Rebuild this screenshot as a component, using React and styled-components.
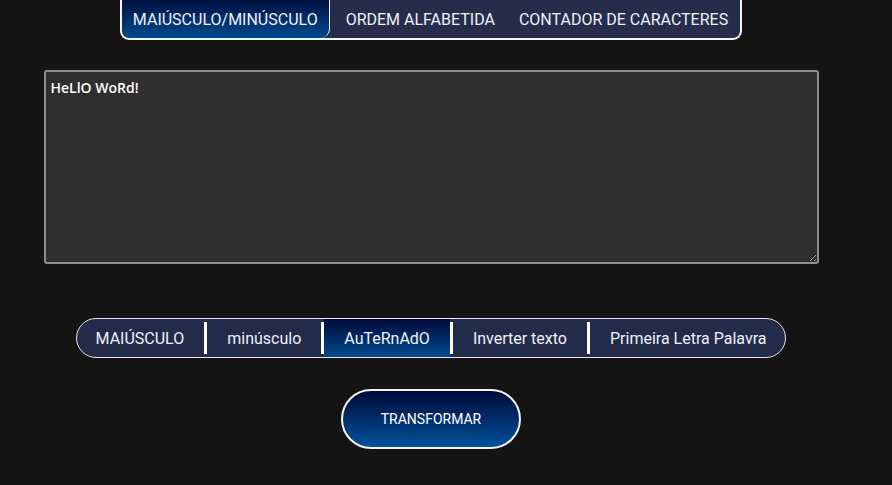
import React, { useState } from 'react';
import styled, { createGlobalStyle } from 'styled-components';

const Global = createGlobalStyle`
  body {
    margin: 0;
    background: #141414;
    font-family: Roboto, "Liberation Sans", sans-serif;
  }
`

const modes = ['MAIÚSCULO', 'minúsculo', 'AuTeRnAdO', 'Inverter texto', 'Primeira Letra Palavra'];
const tabs = ['MAIÚSCULO/MINÚSCULO', 'ORDEM ALFABETIDA', 'CONTADOR DE CARACTERES'];

const App = () => {
  const [tab, setTab] = useState(0);
  const [mode, setMode] = useState(2);
  const [text, setText] = useState('HeLlO WoRd!');

  return (
    <>
      <Global />
      <Page>
        <Nav>
          {tabs.map((t, i) => (
            <Tab key={t} active={i === tab} onClick={() => setTab(i)}>{t}</Tab>
          ))}
        </Nav>
        <TextBox value={text} onChange={(e) => setText(e.target.value)} />
        <Options>
          {modes.map((m, i) => (
            <React.Fragment key={m}>
              {i > 0 && <Divider />}
              <Option active={i === mode} onClick={() => setMode(i)}>{m}</Option>
            </React.Fragment>
          ))}
        </Options>
        <Submit>TRANSFORMAR</Submit>
      </Page>
    </>
  )
}

export default App;

const Page = styled.div`
  width: 862px;
  display: flex;
  flex-direction: column;
  align-items: center;
`

const Nav = styled.div`
  display: flex;
  margin-top: -4px;
  height: 42px;
  border: 2px solid #f2f2f2;
  border-top: none;
  border-radius: 0 0 9px 9px;
  background: #252d4b;
  overflow: hidden;
`

const Tab = styled.div`
  display: flex;
  align-items: center;
  padding: 4px ${p => p.active ? '11px' : '12px'} 0;
  font-size: 16px;
  color: #eef1f8;
  cursor: pointer;
  background: ${p => p.active ? 'linear-gradient(#000a38, #004a8e)' : 'transparent'};
  border-right: ${p => p.active ? '1px solid #f2f2f2' : 'none'};
  border-radius: ${p => p.active ? '0 0 9px 9px' : '0'};
  margin-right: ${p => p.active ? '4px' : '0'};
`

const TextBox = styled.textarea`
  box-sizing: border-box;
  width: 775px;
  height: 194px;
  margin-top: 30px;
  padding: 6px 5px;
  background: #2f2f2f;
  border: 2px solid #8e8e8e;
  border-radius: 3px;
  color: #ffffff;
  font-family: "Open Sans", sans-serif;
  font-weight: 600;
  font-size: 14px;
  outline: none;
`

const Options = styled.div`
  display: flex;
  align-items: center;
  height: 38px;
  margin-top: 54px;
  border: 1px solid #e8e8e8;
  border-radius: 20px;
  background: #232b4a;
  overflow: hidden;
  padding: 0 19px;
`

const Option = styled.div`
  height: 100%;
  display: flex;
  align-items: center;
  padding: 0 20px;
  font-size: 16px;
  color: #eef1f8;
  cursor: pointer;
  background: ${p => p.active ? 'linear-gradient(#000a38, #004a8e)' : 'transparent'};
  &:first-child { padding-left: 0; }
  &:last-child { padding-right: 0; }
`

const Divider = styled.div`
  width: 3px;
  height: 32px;
  background: #ffffff;
  flex-shrink: 0;
`

const Submit = styled.button`
  margin-top: 31px;
  width: 180px;
  height: 60px;
  border: 2px solid #f4f4f4;
  border-radius: 30px;
  background: linear-gradient(#000a38, #00529c);
  color: #ffffff;
  font-family: Roboto, sans-serif;
  font-size: 14px;
  cursor: pointer;
`
